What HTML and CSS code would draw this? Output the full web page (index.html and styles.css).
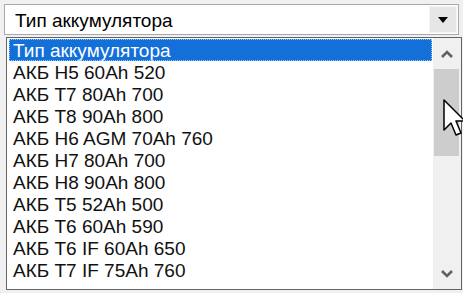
FILE: index.html
```html
<!DOCTYPE html>
<html lang="ru">
<head>
    <meta charset="UTF-8">
    <title>Тип аккумулятора</title>
    <link rel="stylesheet" href="styles.css">
</head>
<body>
    <div class="combo">
        <div class="combo-text">Тип аккумулятора</div>
        <div class="combo-btn">
            <svg width="10" height="6" viewBox="0 0 10 6"><path d="M0 0H10L5 6Z" fill="#000"/></svg>
        </div>
    </div>

    <div class="list">
        <div class="items">
            <div class="item sel">Тип аккумулятора</div>
            <div class="item">АКБ H5 60Ah 520</div>
            <div class="item">АКБ T7 80Ah 700</div>
            <div class="item">АКБ T8 90Ah 800</div>
            <div class="item">АКБ H6 AGM 70Ah 760</div>
            <div class="item">АКБ H7 80Ah 700</div>
            <div class="item">АКБ H8 90Ah 800</div>
            <div class="item">АКБ T5 52Ah 500</div>
            <div class="item">АКБ T6 60Ah 590</div>
            <div class="item">АКБ T6 IF 60Ah 650</div>
            <div class="item">АКБ T7 IF 75Ah 760</div>
        </div>
        <div class="scroll">
            <div class="arrow">
                <svg width="12" height="8" viewBox="0 0 12 8"><path d="M1 7L6 2L11 7" fill="none" stroke="#606060" stroke-width="2.6"/></svg>
            </div>
            <div class="thumb"></div>
            <div class="track"></div>
            <div class="arrow">
                <svg width="12" height="8" viewBox="0 0 12 8"><path d="M1 1L6 6L11 1" fill="none" stroke="#606060" stroke-width="2.6"/></svg>
            </div>
        </div>
    </div>

    <!-- указатель мыши над полосой прокрутки -->
    <svg class="cursor" width="22" height="38" viewBox="0 0 22 38">
        <path d="M1 1V31L8 24L13 36L18 34L13 22H22Z" fill="#fff" stroke="#000" stroke-width="1.5" stroke-linejoin="round"/>
    </svg>
</body>
</html>
```

FILE: styles.css
```css
body {
    margin: 0;
    width: 463px;
    height: 293px;
    overflow: hidden;
    background-color: #f0f0f0;
    font-family: "Liberation Sans", Arial, sans-serif;
    font-size: 19px;
    position: relative;
}
.combo {
    display: flex;
    height: 29px;
    margin: 4px 4px 0 4px;
    border: 1px solid #a9a9a9;
    background-color: white;
}
.combo-text {
    flex: 1;
    padding: 2px 0 0 10px;
    line-height: 27px;
}
.combo-btn {
    width: 26px;
    margin: 1px;
    background-color: #e6e6e6;
    border: 1px solid #f4f4f4;
    display: flex;
    justify-content: center;
    align-items: center;
}
.list {
    display: flex;
    height: 251px;
    margin: 2px 1px 0 6px;
    border: 1px solid #646464;
    background-color: white;
}
.items {
    flex: 1;
    padding: 1px 1px 0 2px;
}
.item {
    height: 20px;
    padding: 2px 0 0 4px;
    line-height: 20px;
    color: #111;
}
.item.sel {
    background-color: #1370d8;
    color: white;
    outline: 1px dotted #9cc4f0;
    outline-offset: -1px;
}
.scroll {
    width: 28px;
    display: flex;
    flex-direction: column;
    background-color: #f0f0f0;
}
.arrow {
    height: 31px;
    display: flex;
    justify-content: center;
    align-items: center;
}
.thumb {
    height: 87px;
    margin: 0 2px 0 1px;
    background-color: #cdcdcd;
}
.track {
    flex: 1;
}
.cursor {
    position: absolute;
    left: 443px;
    top: 99px;
}
```
